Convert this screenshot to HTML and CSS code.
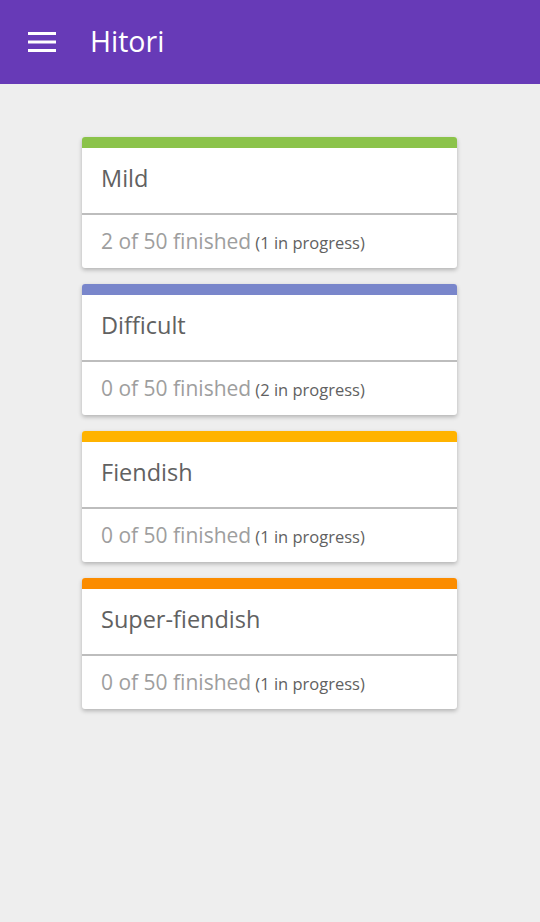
FILE: index.html
```html
<!DOCTYPE html>
<html>
<head>
<meta charset="utf-8">
<link rel="stylesheet" href="styles.css">
</head>
<body>
<header class="toolbar">
  <svg class="menu" width="28" height="20" viewBox="0 0 28 20"><rect x="0" y="0" width="28" height="3" fill="#fff"/><rect x="0" y="8.5" width="28" height="3" fill="#fff"/><rect x="0" y="17" width="28" height="3" fill="#fff"/></svg>
  <span class="title">Hitori</span>
</header>
<main class="list">
  <div class="card">
    <div class="bar green"></div>
    <div class="name">Mild</div>
    <div class="status"><span class="done">2 of 50 finished</span> <span class="prog">(1 in progress)</span></div>
  </div>
  <div class="card">
    <div class="bar indigo"></div>
    <div class="name">Difficult</div>
    <div class="status"><span class="done">0 of 50 finished</span> <span class="prog">(2 in progress)</span></div>
  </div>
  <div class="card">
    <div class="bar amber"></div>
    <div class="name">Fiendish</div>
    <div class="status"><span class="done">0 of 50 finished</span> <span class="prog">(1 in progress)</span></div>
  </div>
  <div class="card">
    <div class="bar orange"></div>
    <div class="name">Super-fiendish</div>
    <div class="status"><span class="done">0 of 50 finished</span> <span class="prog">(1 in progress)</span></div>
  </div>
</main>
</body>
</html>
```
FILE: styles.css
```css
html, body {
  margin: 0;
  padding: 0;
  background: #eeeeee;
  font-family: "Open Sans", "Noto Sans", sans-serif;
}
.toolbar {
  height: 84px;
  background: #673ab7;
  display: flex;
  align-items: center;
  padding-left: 28px;
  box-sizing: border-box;
}
.menu {
  display: block;
  margin-top: -1px;
}
.title {
  color: #ffffff;
  font-family: "Open Sans", sans-serif;
  font-size: 28.5px;
  margin-left: 34px;
  margin-top: -2px;
}
.list {
  display: flex;
  flex-direction: column;
  gap: 16px;
  padding: 53px 0 20px 82px;
}
.card {
  width: 375px;
  background: #ffffff;
  border-radius: 3px;
  box-shadow: 0 2px 4px rgba(0,0,0,0.25);
  overflow: hidden;
}
.bar {
  height: 11px;
}
.green { background: #8bc34a; }
.indigo { background: #7986cb; }
.amber { background: #ffb300; }
.orange { background: #fb8c00; }
.name {
  height: 67px;
  box-sizing: border-box;
  border-bottom: 2px solid #bdbdbd;
  padding: 14px 0 0 19px;
  font-size: 23.5px;
  color: #616161;
}
.status {
  height: 53px;
  box-sizing: border-box;
  padding: 12px 0 0 19px;
  white-space: nowrap;
}
.done {
  font-size: 21px;
  color: #9e9e9e;
}
.prog {
  font-size: 16.5px;
  color: #616161;
}
```
